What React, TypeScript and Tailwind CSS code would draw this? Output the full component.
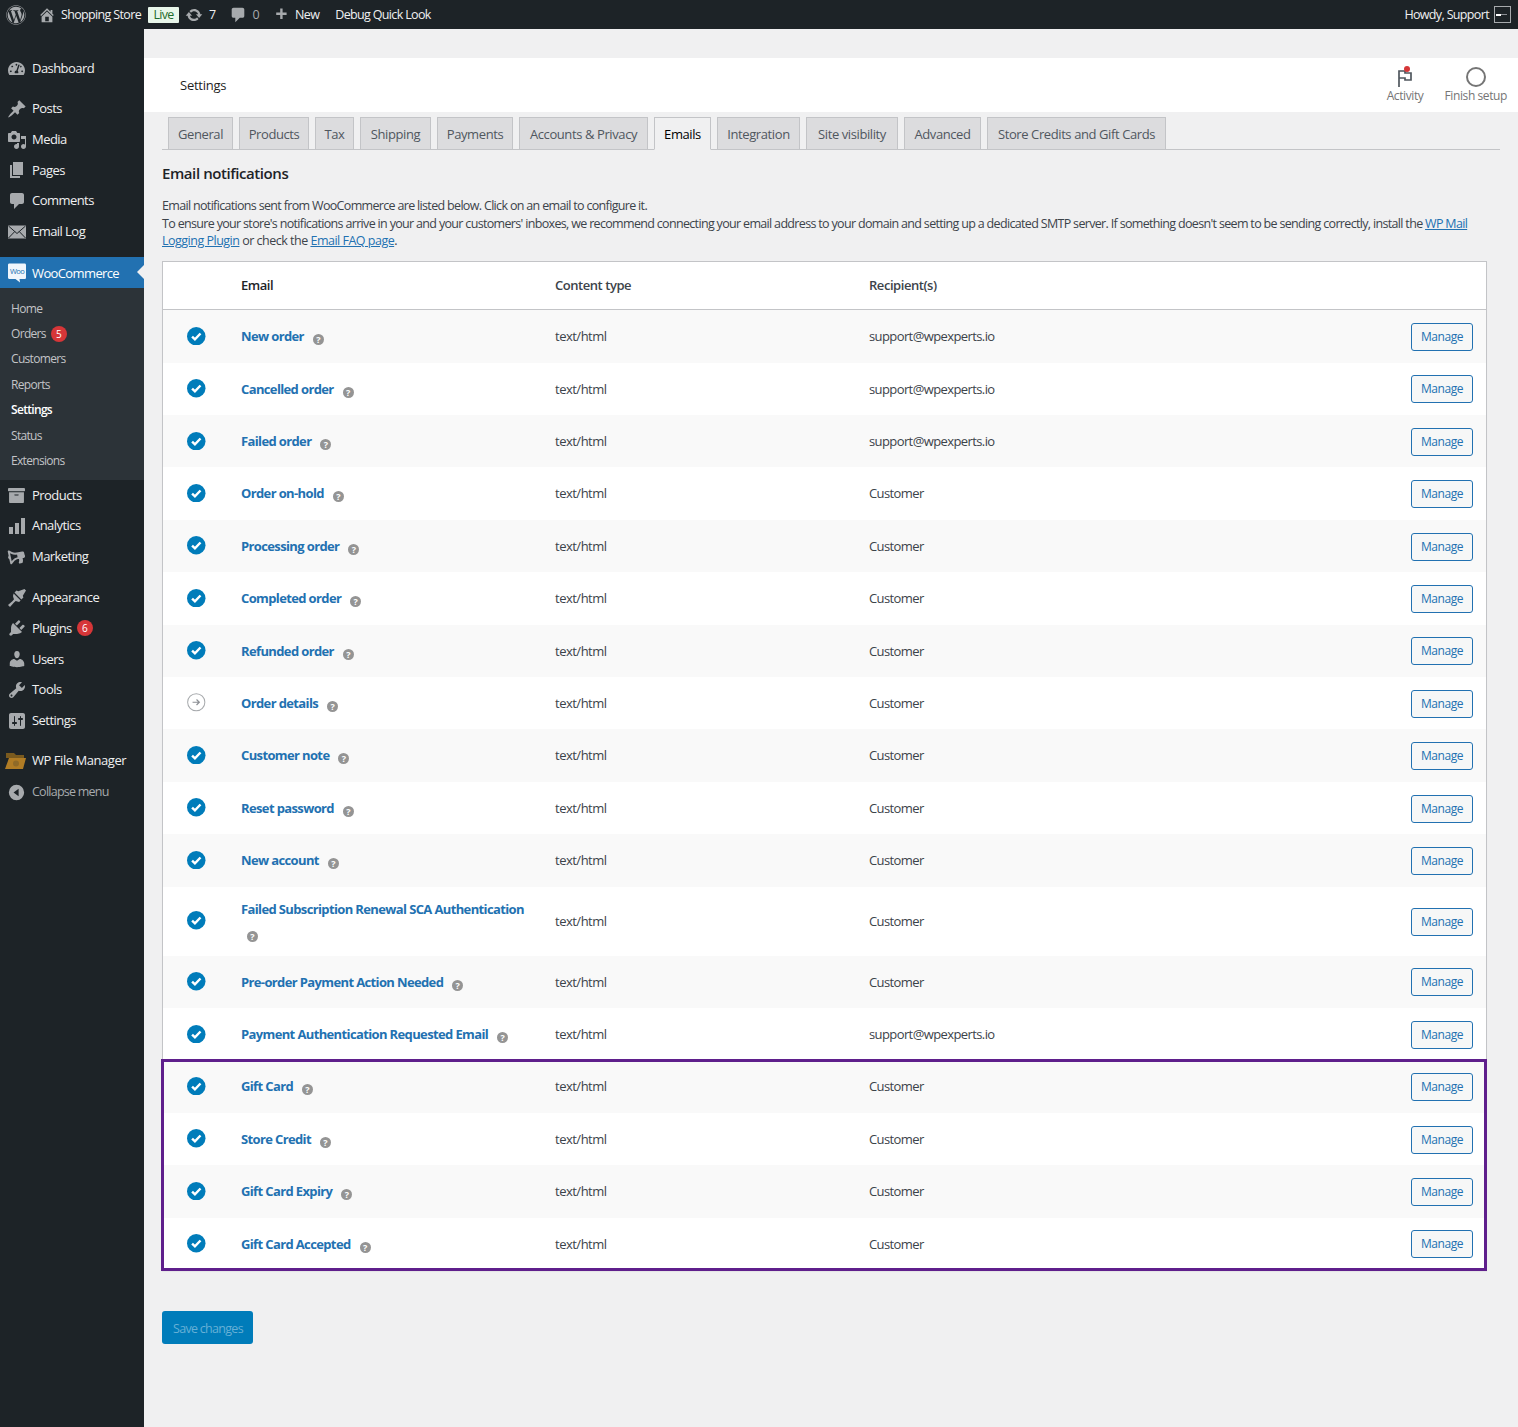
import React from "react";
import { FaTachometerAlt, FaArchive, FaBullhorn, FaWordpress } from "react-icons/fa";

const P = ({ d, cls = "" }: { d: string; cls?: string }) => (
  <svg viewBox="0 0 20 20" className={cls} fill="currentColor" fillRule="evenodd"><path d={d} /></svg>
);
const paths = {
  pin: "M10.44 3.02l1.82-1.82 6.36 6.35-1.83 1.82c-1.05-.68-2.48-.57-3.41.36l-.75.75c-.92.93-1.04 2.35-.35 3.41l-1.83 1.82-2.41-2.41-2.8 2.79c-.42.42-3.38 2.71-3.8 2.29s1.86-3.39 2.28-3.81l2.79-2.79L4.1 9.36l1.83-1.82c1.05.69 2.48.57 3.4-.36l.75-.75c.93-.92 1.05-2.35.36-3.41z",
  media: "M13 11V4c0-.55-.45-1-1-1h-1.67L9 1H5L3.67 3H2c-.55 0-1 .45-1 1v7c0 .55.45 1 1 1h10c.55 0 1-.45 1-1zM7 4.5c1.38 0 2.5 1.12 2.5 2.5S8.38 9.5 7 9.5 4.5 8.38 4.5 7 5.62 4.5 7 4.5zM14 6h5v10.5c0 1.38-1.12 2.5-2.5 2.5S14 17.88 14 16.5s1.12-2.5 2.5-2.5c.56 0 1.08.19 1.5.5V9h-4V6zm-4 8.05V13h2v3.5c0 1.38-1.12 2.5-2.5 2.5S7 17.88 7 16.5 8.12 14 9.5 14c.18 0 .34.02.5.05z",
  pages: "M6 15V2h10v13H6zm-1 1h8v2H3V5h2v11z",
  comment: "M5 2h10c1.1 0 2 .9 2 2v7c0 1.1-.9 2-2 2h-3l-5 5v-5H5c-1.1 0-2-.9-2-2V4c0-1.1.9-2 2-2z",
  users: "M10 9.25c-2.27 0-2.73-3.44-2.73-3.44C7 4.02 7.82 2 9.97 2c2.16 0 2.98 2.02 2.71 3.81 0 0-.41 3.44-2.68 3.44zm0 2.57L12.72 10c2.39 0 4.52 2.33 4.52 4.53v2.49s-3.65 1.13-7.24 1.13c-3.65 0-7.24-1.13-7.24-1.13v-2.49c0-2.25 1.94-4.48 4.47-4.48z",
  tools: "M16.68 9.77c-1.34 1.34-3.3 1.67-4.95.99l-5.41 6.52c-.99.99-2.59.99-3.58 0s-.99-2.59 0-3.57l6.52-5.42c-.68-1.65-.35-3.61.99-4.95 1.28-1.28 3.12-1.62 4.72-1.06l-2.89 2.89 2.82 2.82 2.86-2.87c.53 1.58.19 3.4-1.08 4.66zM3.81 16.21c.4.39 1.04.39 1.43 0 .4-.4.4-1.04 0-1.43-.39-.4-1.03-.4-1.43 0-.39.39-.39 1.03 0 1.43z",
  plugin: "M13.11 4.36L9.87 7.6 8 5.73l3.24-3.24c.35-.34 1.05-.2 1.56.31.52.51.66 1.21.31 1.56zm-8 1.77l.91-1.12 9.01 9.01-1.19.84c-.71.71-2.58 1.16-3.82 1.16H6.14L4.9 17.26c-.59.59-1.54.59-2.12 0-.59-.58-.59-1.53 0-2.12l1.24-1.24v-3.88c0-1.13.52-3.15 1.09-3.89zm7.26 3.97l3.24-3.24c.34-.35 1.04-.21 1.55.31.52.51.66 1.21.31 1.55l-3.24 3.25z",
  settings: "M18 16V4c0-1.1-.9-2-2-2H4c-1.1 0-2 .9-2 2v12c0 1.1.9 2 2 2h12c1.1 0 2-.9 2-2zM8 11h1c.55 0 1 .45 1 1s-.45 1-1 1H8v1.5c0 .28-.22.5-.5.5s-.5-.22-.5-.5V13H6c-.55 0-1-.45-1-1s.45-1 1-1h1V5.500c0-.28.22-.5.5-.5s.5.22.5.5V11zm5-2h-1c-.55 0-1-.45-1-1s.45-1 1-1h1V5.500c0-.28.22-.5.5-.5s.5.22.5.5V7h1c.55 0 1 .45 1 1s-.45 1-1 1h-1v5.500c0 .28-.22.5-.5.5s-.5-.22-.5-.5V9z",
  home: "M16 8.5l1.53 1.53-1.06 1.06L10 4.62l-6.47 6.47-1.06-1.06L10 2.5l4 4v-2h2v4zm-6-2.46l6 5.99V18H4v-5.97zM12 17v-5H8v5h4z",
  update: "M10.2 3.28c3.53 0 6.43 2.61 6.92 6h2.08l-3.5 4-3.5-4h2.32c-.45-1.97-2.21-3.44-4.32-3.44-1.45 0-2.73.71-3.54 1.78L4.95 5.66C6.23 4.2 8.11 3.28 10.2 3.28zm-.4 13.44c-3.52 0-6.43-2.61-6.92-6H.8l3.5-4c1.17 1.33 2.33 2.67 3.5 4H5.48c.45 1.97 2.21 3.44 4.32 3.44 1.45 0 2.73-.71 3.54-1.78l1.71 1.95c-1.28 1.46-3.15 2.39-5.25 2.39z",
  plus: "M17 7v3h-5v5H9v-5H4V7h5V2h3v5h5z",
  analytics: "M2 18V11h4v7H2zm6 0V7h4v11H8zm6 0V2h4v16h-4z",
  appearance: "M19 2.5l-1.5-1.5-6.2 2.2-1.8-.6-2 2 6.900 6.900 2-2-.6-1.800zM6.600 5.500l7 7-1.500 1.500-1.800-.4-1.600-.6-1.700 1.400L3 19l-2-2 4.600-4 1.400-1.700-.6-1.600-.4-1.800z",
};

const Ic = ({ d }: { d: string }) => <P d={d} cls="w-5 h-5" />;
const EmailIcon = () => (
  <svg viewBox="0 0 20 20" className="w-5 h-5">
    <rect x="1" y="3.500" width="18" height="13" fill="#a7aaad" />
    <path d="M1.500 4l8.500 7.500L18.500 4M1.500 16l6.300-6.500M18.500 16l-6.300-6.500" fill="none" stroke="#1d2327" strokeWidth="1" />
  </svg>
);

const menu1 = [
  { label: "Posts", icon: <Ic d={paths.pin} /> },
  { label: "Media", icon: <Ic d={paths.media} /> },
  { label: "Pages", icon: <Ic d={paths.pages} /> },
  { label: "Comments", icon: <Ic d={paths.comment} /> },
  { label: "Email Log", icon: <EmailIcon /> },
];
const menu2 = [
  { label: "Products", icon: <FaArchive className="w-[17px] h-[17px]" /> },
  { label: "Analytics", icon: <Ic d={paths.analytics} /> },
  { label: "Marketing", icon: <FaBullhorn className="w-[17px] h-[17px] -scale-x-100 -rotate-12" /> },
];
const menu3 = [
  { label: "Appearance", icon: <Ic d={paths.appearance} /> },
  { label: "Plugins", icon: <Ic d={paths.plugin} />, badge: "6" },
  { label: "Users", icon: <Ic d={paths.users} /> },
  { label: "Tools", icon: <Ic d={paths.tools} /> },
  { label: "Settings", icon: <Ic d={paths.settings} /> },
];

const Badge = ({ n }: { n: string }) => (
  <span className="ml-[5px] w-4 h-4 rounded-full bg-[#d63638] text-white text-[10px] leading-4 text-center tracking-normal">{n}</span>
);

const MenuItem = ({ label, icon, badge, wide }: { label: string; icon: React.ReactNode; badge?: string; wide?: boolean }) => (
  <div className="h-[30.8px] flex items-center text-[#f0f0f1]">
    <span className="w-8 flex justify-center pl-[1px] text-[#a7aaad] shrink-0">{icon}</span>
    <span className={wide ? "tracking-[-0.450px]" : "tracking-[-0.550px]"}>{label}</span>
    {badge && <Badge n={badge} />}
  </div>
);

const Sidebar = () => (
  <aside className="w-[144px] shrink-0 bg-[#1d2327] pt-[24.400px] tracking-[-0.620px]">
    <MenuItem label="Dashboard" icon={<FaTachometerAlt className="w-[17px] h-[17px]" />} />
    <div className="h-[9.2px]" />
    {menu1.map((m) => <MenuItem key={m.label} {...m} />)}
    <div className="h-[10px]" />
    <div className="h-[31px] pt-[1px] bg-[#2271b1] flex items-center text-white relative">
      <span className="w-8 flex justify-center pl-[1px] shrink-0">
        <svg viewBox="0 0 20 20" className="w-5 h-5">
          <path d="M2.500 .5h15c1 0 1.500.6 1.500 1.500v12.500c0 1-.6 1.500-1.500 1.500H12.500l.5 3.500L8.500 16H2.500C1.500 16 1 15.400 1 14.500V2C1 1 1.500 .5 2.500 .5z" fill="#f0f6fc" />
          <text x="10" y="10.500" textAnchor="middle" fontSize="7.500" fill="#2271b1" fontFamily="Open Sans">Woo</text>
        </svg>
      </span>
      <span>WooCommerce</span>
      <span className="absolute right-0 top-[8px] w-0 h-0 border-y-[7.500px] border-y-transparent border-r-[7.500px] border-r-[#f0f0f1]" />
    </div>
    <div className="bg-[#2c3338] pt-[7.500px] pb-[6.300px] text-[12px] tracking-[-0.680px]">
      {["Home", "Orders", "Customers", "Reports", "Settings", "Status", "Extensions"].map((s) => (
        <div key={s} className={`h-[25.400px] flex items-center pl-[11px] ${s === "Settings" ? "text-white font-semibold" : "text-[#c3c4c7]"}`}>
          {s}
          {s === "Orders" && <Badge n="5" />}
        </div>
      ))}
    </div>
    {menu2.map((m) => <MenuItem key={m.label} {...m} />)}
    <div className="h-[10px]" />
    {menu3.map((m) => <MenuItem key={m.label} {...m} />)}
    <div className="h-[9.200px]" />
    <MenuItem
      label="WP File Manager"
      wide
      icon={
        <svg viewBox="0 0 22 18" className="w-[22px] h-[18px] -ml-[2px]">
          <path d="M1 1h8l2 2h8v3H1z" fill="#7a5a1e" />
          <path d="M4 6h17l-3 11H0z" fill="#b07c25" />
          <circle cx="11" cy="11.500" r="3" fill="#8f6a28" />
        </svg>
      }
    />
    <div className="h-[30.800px] pt-[1px] flex items-center text-[#a7aaad] text-[12.500px] tracking-[-0.750px]">
      <span className="w-8 flex justify-center pl-[1px] shrink-0">
        <svg viewBox="0 0 20 20" className="w-[17px] h-[17px]" fill="currentColor" fillRule="evenodd">
          <path d="M10 1a9 9 0 110 18 9 9 0 010-18zM12.500 5.500L6.500 10l6 4.500z" />
        </svg>
      </span>
      Collapse menu
    </div>
  </aside>
);

const AdminBar = () => (
  <header className="h-[29px] pt-[1px] bg-[#1d2327] flex items-center text-[#f0f0f1] text-[12.500px] tracking-[-0.650px] shrink-0">
    <FaWordpress className="ml-[6px] -mt-[1px] w-5 h-5 text-[#a7aaad]" />
    <P d={paths.home} cls="ml-[12px] -mt-[1px] w-[18px] h-[18px] text-[#a7aaad]" />
    <span className="ml-[5px]">Shopping Store</span>
    <span className="ml-[7px] -mt-[1px] w-[31px] h-4 bg-[#e8f6ea] text-[#1f6b2a] text-center leading-4 rounded-[1px]">Live</span>
    <P d={paths.update} cls="ml-[6px] -mt-[1px] w-[18px] h-[18px] text-[#a7aaad]" />
    <span className="ml-[6px]">7</span>
    <P d={paths.comment} cls="ml-[13px] w-[18px] h-[18px] text-[#a7aaad]" />
    <span className="ml-[6px] text-[#a7aaad]">0</span>
    <P d={paths.plus} cls="ml-[14px] w-[16px] h-[16px] text-[#a7aaad]" />
    <span className="ml-[6px]">New</span>
    <span className="ml-4">Debug Quick Look</span>
    <span className="ml-auto">Howdy, Support</span>
    <span className="ml-[5px] mr-[7px] -mt-[1px] w-[17px] h-[17px] border border-[#a7aaad] flex items-center">
      <span className="ml-[1px] w-[5px] h-[2px] bg-white" />
      <span className="w-[6px] h-[1px] bg-[#8c8f94]" />
    </span>
  </header>
);

const TopBar = () => (
  <div className="mt-[29px] h-[54px] bg-white flex items-center justify-between">
    <span className="ml-[36px] pt-[2px] text-[13px] tracking-[-0.250px] text-[#1e1e1e]">Settings</span>
    <div className="flex text-[12px] tracking-[-0.400px] text-[#757575] mr-[11px] -mt-[1px]">
      <div className="flex flex-col items-center w-[60px] mr-[10px] pl-[1px]">
        <span className="relative h-[22px]">
          <svg viewBox="0 0 20 20" className="w-[20px] h-[20px] text-[#50575e]" fill="none" stroke="currentColor" strokeWidth="1.700">
            <path d="M4 20V4h6v2h6v7H10v-2H4" />
          </svg>
          <span className="absolute -top-[1px] right-[5px] w-[6px] h-[6px] rounded-full bg-[#d63638]" />
        </span>
        <span className="leading-[14px]">Activity</span>
      </div>
      <div className="flex flex-col items-center">
        <span className="ml-[1px] w-5 h-5 mb-[2px] rounded-full border-2 border-[#757575]" />
        <span className="leading-[14px]">Finish setup</span>
      </div>
    </div>
  </div>
);

const tabs: [string, number][] = [
  ["General", 65], ["Products", 70], ["Tax", 39], ["Shipping", 71], ["Payments", 76],
  ["Accounts & Privacy", 129], ["Emails", 57], ["Integration", 83], ["Site visibility", 92], ["Advanced", 77], ["Store Credits and Gift Cards", 179],
];

const Tabs = () => (
  <div className="ml-[18px] mr-[18px] pl-[6px] mt-[5px] h-[33px] flex gap-[6px] border-b border-[#c3c4c7] items-end">
    {tabs.map(([t, w]) => {
      const active = t === "Emails";
      return (
        <div
          key={t}
          style={{ width: w }}
          className={`border border-[#c3c4c7] text-center font-medium whitespace-nowrap text-[13px] tracking-[-0.400px] ${active ? "h-[33px] bg-[#f0f0f1] border-b-[#f0f0f1] -mb-[1px] text-black leading-[33px]" : "h-[32px] bg-[#dcdcde] border-b-0 text-[#50575e] leading-[33px]"}`}
        >
          {t}
        </div>
      );
    })}
  </div>
);

const rows = [
  { n: "New order", r: "support@wpexperts.io" },
  { n: "Cancelled order", r: "support@wpexperts.io" },
  { n: "Failed order", r: "support@wpexperts.io" },
  { n: "Order on-hold", r: "Customer" },
  { n: "Processing order", r: "Customer" },
  { n: "Completed order", r: "Customer" },
  { n: "Refunded order", r: "Customer" },
  { n: "Order details", r: "Customer", manual: true },
  { n: "Customer note", r: "Customer" },
  { n: "Reset password", r: "Customer" },
  { n: "New account", r: "Customer" },
  { n: "Failed Subscription Renewal SCA Authentication", r: "Customer", tall: true },
  { n: "Pre-order Payment Action Needed", r: "Customer" },
  { n: "Payment Authentication Requested Email", r: "support@wpexperts.io" },
];
const gift = ["Gift Card", "Store Credit", "Gift Card Expiry", "Gift Card Accepted"];

const Check = () => (
  <svg viewBox="0 0 20 20" className="w-[18.500px] h-[18.500px]">
    <circle cx="10" cy="10" r="10" fill="#007cba" />
    <path d="M5.500 10.300l3.100 3.100 6-6.400" fill="none" stroke="#fff" strokeWidth="2.600" />
  </svg>
);
const Manual = () => (
  <svg viewBox="0 0 20 20" className="w-[18.500px] h-[18.500px]" fill="none">
    <circle cx="10" cy="10" r="9.300" stroke="#a7aaad" strokeWidth="1.100" />
    <path d="M6 10h7M10.300 7l3 3-3 3" stroke="#8c8f94" strokeWidth="1.300" />
  </svg>
);
const Help = () => (
  <span className="inline-block align-[-2px] ml-1.5 w-[11px] h-[11px] rounded-full bg-[#949494] text-white text-[9px] leading-[11px] text-center font-bold tracking-normal">?</span>
);

const Row = ({ n, r, gray, manual, tall }: { n: string; r: string; gray: boolean; manual?: boolean; tall?: boolean }) => (
  <div className={`grid grid-cols-[78px_314px_314px_1fr] items-center pr-[13px] ${tall ? "h-[69.100px]" : "h-[52.400px]"} ${gray ? "bg-[#f9f9f9]" : "bg-white"}`}>
    <span className="pl-[24px] -mt-[1px] flex">{manual ? <Manual /> : <Check />}</span>
    <div className="pr-[24px] pt-[1px] leading-[23.500px]">
      <span className="font-bold tracking-[-0.630px] text-[#2271b1]">{n}</span> <Help />
    </div>
    <span className="pt-[1px] tracking-[-0.500px]">text/html</span>
    <div className="flex items-center justify-between">
      <span className="pt-[1px] tracking-[-0.600px]">{r}</span>
      <span className="mt-[1px] w-[62px] h-[28px] border border-[#2271b1] rounded-[3px] bg-[#f6f7f7] text-[#2271b1] text-center leading-[26px] text-[12px] tracking-[-0.450px]">Manage</span>
    </div>
  </div>
);

export default function App() {
  return (
    <div className="min-h-[1427px] bg-[#f0f0f1] flex flex-col font-['Open_Sans',sans-serif] text-[13px] tracking-[-0.400px] text-[#3c434a]">
      <AdminBar />
      <div className="flex flex-1">
        <Sidebar />
        <main className="flex-1 min-w-0">
          <TopBar />
          <Tabs />
          <div className="ml-[18px] mr-[31px]">
            <h2 className="mt-[13px] text-[15px] leading-5 font-semibold text-[#1d2327] tracking-[-0.420px]">Email notifications</h2>
            <p className="mt-[14px] leading-[17.700px] text-[12.500px] tracking-[-0.670px] whitespace-nowrap">
              Email notifications sent from WooCommerce are listed below. Click on an email to configure it.<br />
              To ensure your store's notifications arrive in your and your customers' inboxes, we recommend connecting your email address to your domain and setting up a dedicated SMTP server. If something doesn't seem to be sending correctly, install the <span className="text-[#2271b1] underline">WP Mail</span><br />
              <span className="tracking-[-0.500px]"><span className="text-[#2271b1] underline">Logging Plugin</span> or check the <span className="text-[#2271b1] underline">Email FAQ page</span>.</span>
            </p>
            <div className="mt-[11px] border border-[#c3c4c7] bg-white shadow-[0_1px_1px_rgba(0,0,0,0.04)]">
              <div className="h-[48.200px] pt-[1px] border-b border-[#c3c4c7] grid grid-cols-[78px_314px_314px_1fr] items-center font-semibold text-[#1d2327] tracking-[-0.450px]">
                <span />
                <span>Email</span>
                <span className="text-[#3c434a]">Content type</span>
                <span className="text-[#3c434a]">Recipient(s)</span>
              </div>
              {rows.map((x, i) => <Row key={x.n} {...x} gray={i % 2 === 0} />)}
              <div className="relative">
                {gift.map((g, i) => <Row key={g} n={g} r="Customer" gray={i % 2 === 0} />)}
                <div className="absolute -left-[2px] -right-[1px] -top-[1px] -bottom-[1px] border-[3px] border-[#5f1f8c] pointer-events-none" />
              </div>
            </div>
            <div className="mt-[40px] w-[91px] h-[33px] bg-[#007cba] rounded-[3px] text-[#66b0d6] text-[12.500px] tracking-[-0.700px] leading-[36px] pl-[11px]">Save changes</div>
          </div>
        </main>
      </div>
    </div>
  );
}
